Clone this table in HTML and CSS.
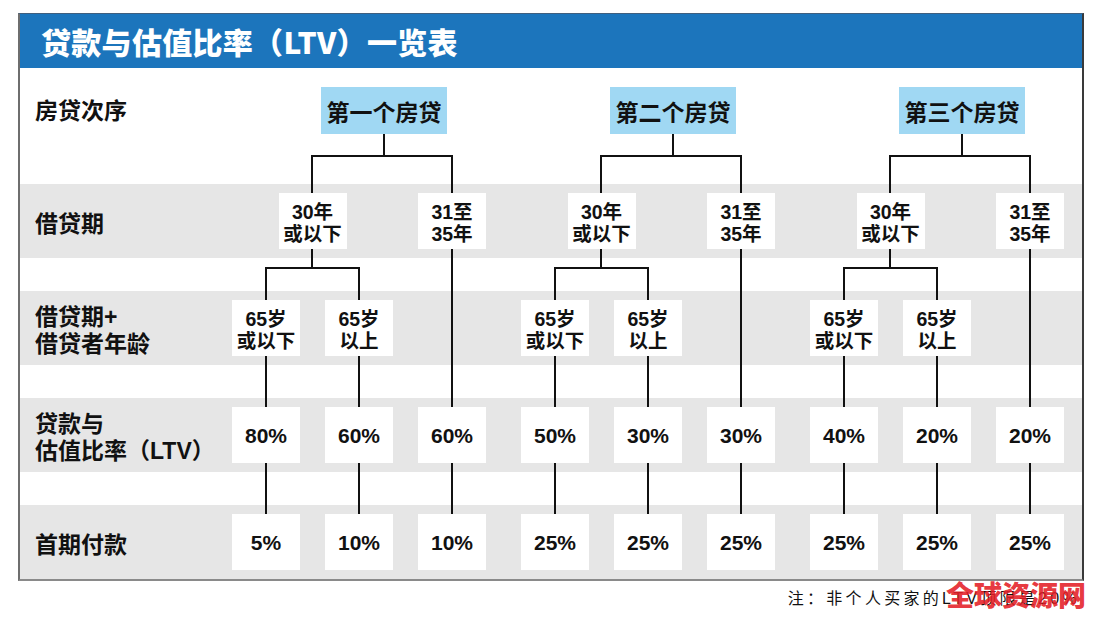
FILE: index.html
```html
<!DOCTYPE html>
<html lang="zh">
<head>
<meta charset="utf-8">
<title>贷款与估值比率（LTV）一览表</title>
<link rel="stylesheet" href="styles.css">
</head>
<body>
<div class="chart">
  <div class="title-bar"><h1 class="title">贷款与估值比率（LTV）一览表</h1></div>
  <div class="body">
    <svg class="links" viewBox="0 0 1062 511" width="1062" height="511">
      <g fill="none" stroke="#111" stroke-width="2" stroke-linecap="square">
        <path d="M364 66V88 M292 88H432 M292 88V200 M246 200H339 M246 200V446 M339 200V446 M432 88V446"/>
        <path d="M653 66V88 M581 88H721 M581 88V200 M535 200H628 M535 200V446 M628 200V446 M721 88V446"/>
        <path d="M942 66V88 M870 88H1010 M870 88V200 M824 200H917 M824 200V446 M917 200V446 M1010 88V446"/>
      </g>
    </svg>
    <div class="row row-head">
      <div class="label">房贷次序</div>
      <div class="groups">
        <div class="head-group"><div class="head-box">第一个房贷</div></div>
        <div class="head-group"><div class="head-box">第二个房贷</div></div>
        <div class="head-group"><div class="head-box">第三个房贷</div></div>
      </div>
    </div>
    <div class="bands">
      <div class="row band">
        <div class="label">借贷期</div>
        <div class="groups">
          <div class="group"><div class="box span2">30年<br>或以下</div><div class="box c3">31至<br>35年</div></div>
          <div class="group"><div class="box span2">30年<br>或以下</div><div class="box c3">31至<br>35年</div></div>
          <div class="group"><div class="box span2">30年<br>或以下</div><div class="box c3">31至<br>35年</div></div>
        </div>
      </div>
      <div class="row band">
        <div class="label">借贷期+<br>借贷者年龄</div>
        <div class="groups">
          <div class="group"><div class="box">65岁<br>或以下</div><div class="box">65岁<br>以上</div></div>
          <div class="group"><div class="box">65岁<br>或以下</div><div class="box">65岁<br>以上</div></div>
          <div class="group"><div class="box">65岁<br>或以下</div><div class="box">65岁<br>以上</div></div>
        </div>
      </div>
      <div class="row band">
        <div class="label">贷款与<br>估值比率（LTV）</div>
        <div class="groups">
          <div class="group"><div class="box pct">80%</div><div class="box pct">60%</div><div class="box pct">60%</div></div>
          <div class="group"><div class="box pct">50%</div><div class="box pct">30%</div><div class="box pct">30%</div></div>
          <div class="group"><div class="box pct">40%</div><div class="box pct">20%</div><div class="box pct">20%</div></div>
        </div>
      </div>
      <div class="row band">
        <div class="label">首期付款</div>
        <div class="groups">
          <div class="group"><div class="box pct">5%</div><div class="box pct">10%</div><div class="box pct">10%</div></div>
          <div class="group"><div class="box pct">25%</div><div class="box pct">25%</div><div class="box pct">25%</div></div>
          <div class="group"><div class="box pct">25%</div><div class="box pct">25%</div><div class="box pct">25%</div></div>
        </div>
      </div>
    </div>
  </div>
</div>
<div class="note">注：非个人买家的LTV顶限是20%<span class="watermark">全球资源网</span></div>
</body>
</html>
```

FILE: styles.css
```css
* { box-sizing: border-box; }

body {
  margin: 0;
  background: #fff;
  color: #111;
  font-family: "Liberation Sans", "Noto Sans CJK SC", sans-serif;
}

.chart {
  margin: 13px 0 0 18px;
  width: 1066px;
  border-top: 1px solid #3f5f7f;
  border-left: 2px solid #6e6e6e;
  border-right: 2px solid #3a3a3a;
  border-bottom: 2px solid #8a8a8a;
}

.title-bar {
  height: 54px;
  background: #1c75bc;
  display: flex;
  align-items: center;
  padding-left: 21px;
}

.title {
  margin: 0;
  color: #fff;
  font-family: "Noto Sans CJK SC", sans-serif;
  font-weight: 900;
  font-size: 30px;
  line-height: 1;
  letter-spacing: 0.3px;
}

.body { position: relative; }

.links {
  position: absolute;
  left: 0;
  top: 0;
  z-index: 0;
}

.row {
  display: flex;
  align-items: center;
}

.row-head {
  height: 116px;
  align-items: flex-start;
  padding-top: 19px;
}

.bands {
  display: flex;
  flex-direction: column;
  gap: 33px;
}

.band {
  height: 74px;
  background: #e6e6e6;
}

.label {
  width: 212px;
  flex: none;
  padding-left: 15px;
  font-weight: 700;
  font-size: 23px;
  line-height: 27px;
}

.band .label { padding-top: 6px; }

.row-head .label { line-height: 47px; padding-top: 1px; }

.groups {
  display: flex;
  gap: 35px;
}

.group {
  display: grid;
  grid-template-columns: 68px 68px 68px;
  column-gap: 25px;
}

.head-group {
  width: 254px;
  padding-left: 89px;
}

.head-box {
  position: relative;
  z-index: 1;
  width: 126px;
  height: 47px;
  background: #a0d8f3;
  display: flex;
  align-items: center;
  justify-content: center;
  font-weight: 700;
  font-size: 23px;
}

.box {
  position: relative;
  z-index: 1;
  width: 68px;
  height: 56px;
  padding-top: 3px;
  background: #fff;
  display: flex;
  align-items: center;
  justify-content: center;
  text-align: center;
  font-weight: 700;
  font-size: 19.5px;
  line-height: 22px;
}

.box.span2 {
  grid-column: 1 / 3;
  justify-self: center;
}

.box.c3 { grid-column: 3; }

.box.pct { font-size: 21px; padding-top: 2px; }

.note {
  position: relative;
  width: 1066px;
  margin: 8px 0 0 18px;
  padding-right: 4px;
  text-align: right;
  font-size: 16px;
  line-height: 20px;
  letter-spacing: 3.3px;
  color: #111;
}

.watermark {
  position: absolute;
  right: -2px;
  top: -9px;
  font-family: "Noto Sans CJK SC", sans-serif;
  font-weight: 900;
  font-size: 28px;
  line-height: 1;
  letter-spacing: 0;
  color: rgba(228, 30, 38, 0.9);
}
```
